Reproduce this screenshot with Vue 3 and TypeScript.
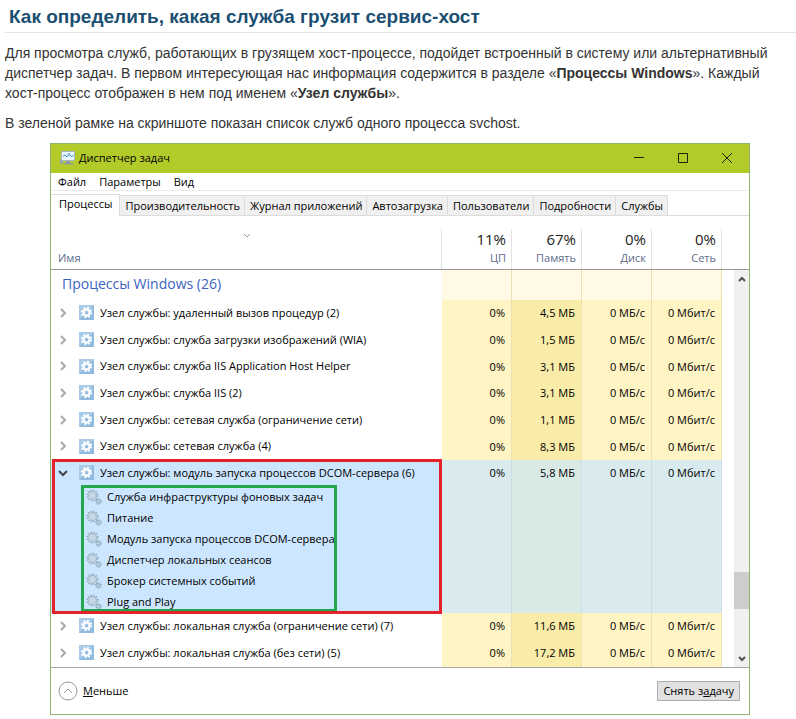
<script setup lang="ts">
import { ref } from 'vue'

interface ProcessRow {
  name: string
  memory: string
  services?: string[]
}

const tabs = ['Процессы', 'Производительность', 'Журнал приложений', 'Автозагрузка', 'Пользователи', 'Подробности', 'Службы']
const activeTab = ref('Процессы')

const columns = [
  { load: '11%', label: 'ЦП' },
  { load: '67%', label: 'Память' },
  { load: '0%', label: 'Диск' },
  { load: '0%', label: 'Сеть' },
]

const rows: ProcessRow[] = [
  { name: 'удаленный вызов процедур (2)', memory: '4,5 МБ' },
  { name: 'служба загрузки изображений (WIA)', memory: '1,5 МБ' },
  { name: 'служба IIS Application Host Helper', memory: '3,1 МБ' },
  { name: 'служба IIS (2)', memory: '3,1 МБ' },
  { name: 'сетевая служба (ограничение сети)', memory: '1,1 МБ' },
  { name: 'сетевая служба (4)', memory: '8,3 МБ' },
  {
    name: 'модуль запуска процессов DCOM-сервера (6)',
    memory: '5,8 МБ',
    services: [
      'Служба инфраструктуры фоновых задач',
      'Питание',
      'Модуль запуска процессов DCOM-сервера',
      'Диспетчер локальных сеансов',
      'Брокер системных событий',
      'Plug and Play',
    ],
  },
  { name: 'локальная служба (ограничение сети) (7)', memory: '11,6 МБ' },
  { name: 'локальная служба (без сети) (5)', memory: '17,2 МБ' },
]
</script>

<template>
  <article class="article">
    <h1>Как определить, какая служба грузит сервис-хост</h1>
    <p>
      Для просмотра служб, работающих в грузящем хост-процессе, подойдет встроенный в систему или альтернативный
      диспетчер задач. В первом интересующая нас информация содержится в разделе «<b>Процессы Windows</b>». Каждый
      хост-процесс отображен в нем под именем «<b>Узел службы</b>».
    </p>
    <p>В зеленой рамке на скриншоте показан список служб одного процесса svchost.</p>

    <section class="window">
      <header class="titlebar">
        <svg class="app-icon" viewBox="0 0 16 14">
          <path d="M1 8h3v5H1z" fill="#9aa3a6" />
          <path d="M2.5.5h13v9h-13z" fill="#e9f4fb" stroke="#a3b9c4" />
          <path d="M4 5.500l2-1.500 2 2 2-3.500 2 3 2.500-1" fill="none" stroke="#3b93c4" />
          <path d="M7 10h4v2h3v1.500H5V12h2z" fill="#8f999c" />
        </svg>
        <span class="title">Диспетчер задач</span>
        <button class="caption" aria-label="Свернуть"><svg viewBox="0 0 12 12"><path d="M1 5.500h10" /></svg></button>
        <button class="caption" aria-label="Развернуть"><svg viewBox="0 0 12 12"><path d="M1.500 1.500h9v9h-9z" /></svg></button>
        <button class="caption" aria-label="Закрыть"><svg viewBox="0 0 12 12"><path d="M1 1l10 10M11 1L1 11" /></svg></button>
      </header>

      <nav class="menu">
        <button>Файл</button>
        <button>Параметры</button>
        <button>Вид</button>
      </nav>

      <div class="tabs" role="tablist">
        <button
          v-for="tab in tabs"
          :key="tab"
          role="tab"
          :class="{ active: tab === activeTab }"
          :aria-selected="tab === activeTab"
          @click="activeTab = tab"
        >{{ tab }}</button>
      </div>

      <div class="pane">
        <table>
          <colgroup>
            <col />
            <col v-for="c in columns" :key="c.label" class="metric-col" />
            <col class="gap-col" />
          </colgroup>
          <thead>
            <tr>
              <th class="name-head">
                <svg class="sort" viewBox="0 0 8 5"><path d="M1 1l3 3 3-3" /></svg>
                <span>Имя</span>
              </th>
              <th v-for="c in columns" :key="c.label" class="metric-head">
                <strong>{{ c.load }}</strong>
                <span>{{ c.label }}</span>
              </th>
              <th></th>
            </tr>
          </thead>
          <tbody>
            <tr class="group">
              <td>Процессы Windows (26)</td>
              <td v-for="c in columns" :key="c.label" class="metric"></td>
              <td></td>
            </tr>
            <tr v-for="row in rows" :key="row.name" :class="row.services ? 'selected' : 'process'">
              <td class="name-cell">
                <div class="name">
                  <svg v-if="row.services" class="chevron open" viewBox="0 0 10 10"><path d="M1 3l4 4 4-4" /></svg>
                  <svg v-else class="chevron" viewBox="0 0 10 10"><path d="M3 1l4 4-4 4" /></svg>
                  <svg class="gear-tile" viewBox="0 0 15 15">
                    <path d="M0 0h15v15H0z" fill="#8fbbe0" />
                    <path d="M0 0h15L0 15z" fill="#a9cbe8" />
                    <circle cx="7.500" cy="7.500" r="4.700" fill="none" stroke="#fff" stroke-width="2" stroke-dasharray="1.850 1.841" />
                    <circle cx="7.500" cy="7.500" r="3.100" fill="none" stroke="#fff" stroke-width="2.200" />
                  </svg>
                  <span>Узел службы: {{ row.name }}</span>
                </div>
                <ul v-if="row.services" class="services">
                  <li v-for="service in row.services" :key="service">
                    <svg class="gears" viewBox="0 0 16 16">
                      <circle cx="6.500" cy="6.500" r="5.200" fill="none" stroke="#93a9b8" stroke-width="1.600" stroke-dasharray="1.400 1.323" />
                      <circle cx="6.500" cy="6.500" r="3.800" fill="#d4e4ef" stroke="#9db3c2" stroke-width="1.200" />
                      <circle cx="6.500" cy="6.500" r="1.700" fill="#cde6ff" stroke="#a9bccb" stroke-width=".8" />
                      <circle cx="12.500" cy="12.500" r="2.600" fill="none" stroke="#8299a9" stroke-width="1.200" stroke-dasharray="1 1.042" />
                      <circle cx="12.500" cy="12.500" r="1.500" fill="#cde6ff" stroke="#8da3b3" />
                    </svg>
                    <span>{{ service }}</span>
                  </li>
                </ul>
              </td>
              <td class="metric">0%</td>
              <td class="metric memory">{{ row.memory }}</td>
              <td class="metric">0 МБ/с</td>
              <td class="metric">0 Мбит/с</td>
              <td></td>
            </tr>
          </tbody>
        </table>
        <div class="scroll">
          <div class="scrollbar">
            <button aria-label="Вверх"><svg viewBox="0 0 10 10"><path d="M2 7l3-3 3 3" /></svg></button>
            <div class="before"></div>
            <div class="thumb"></div>
            <div class="after"></div>
            <button aria-label="Вниз"><svg viewBox="0 0 10 10"><path d="M2 3l3 3 3-3" /></svg></button>
          </div>
        </div>
      </div>

      <footer class="footer">
        <button class="less">
          <svg viewBox="0 0 20 20"><circle cx="10" cy="10" r="9" /><path d="M6 12l4-4 4 4" /></svg>
          <span><u>М</u>еньше</span>
        </button>
        <button class="end-task">Снять з<u>а</u>дачу</button>
      </footer>
    </section>
  </article>
</template>

<style>
body {
  background: #fff;
}
</style>

<style scoped>
.article {
  padding: 1px 0 4px;
  font-family: "Liberation Sans", Arial, sans-serif;
  font-size: 14px;
  line-height: 20px;
  color: #333;
}
h1 {
  margin: 0 0 10px 5px;
  padding: 0 4px;
  border-bottom: 1px solid #e2e2e2;
  font-size: 19px;
  line-height: 31px;
  color: #1b4f72;
}
p {
  margin: 0 16px 10px 5px;
}
button {
  padding: 0;
  border: 0;
  background: none;
  font: inherit;
  color: inherit;
}
svg {
  display: block;
  flex: none;
}
.window {
  margin: 0 46px 0 50px;
  border: 1px solid #8fb56f;
  background: #fff;
  font-family: "Open Sans", "Noto Sans", sans-serif;
  font-size: 11px;
  line-height: 16px;
  color: #000;
}
.titlebar {
  display: flex;
  align-items: center;
  box-sizing: border-box;
  height: 29px;
  padding: 0 0 1px 8px;
  background: #b3cb29;
}
.app-icon {
  width: 16px;
  height: 14px;
}
.title {
  flex: 1;
  margin-left: 4px;
}
.caption {
  display: grid;
  place-items: center;
  width: 44px;
  height: 28px;
}
.caption svg {
  width: 12px;
  height: 12px;
  fill: none;
  stroke: #1c2008;
}
.menu {
  display: flex;
  gap: 13px;
  height: 17px;
  padding-left: 7px;
  border-bottom: 1px solid #ececec;
}
.tabs {
  display: flex;
  align-items: flex-end;
  height: 24px;
  border-bottom: 1px solid #dcdcdc;
}
.tabs button {
  height: 20px;
  padding: 0 4px 0 5px;
  border: 1px solid #dcdcdc;
  border-width: 1px 1px 0 0;
  background: #f0f0f0;
  white-space: nowrap;
}
.tabs .active {
  height: 22px;
  margin-bottom: -1px;
  padding: 0 7px 3px 8px;
  background: #fff;
}
.pane {
  display: flex;
  border-bottom: 1px solid #a6a6a6;
}
table {
  flex: 1;
  min-width: 0;
  table-layout: fixed;
  border-collapse: separate;
  border-spacing: 0;
}
.metric-col {
  width: 70px;
}
.gap-col {
  width: 12px;
}
th,
td {
  padding: 0;
  font-weight: 400;
  text-align: left;
  white-space: nowrap;
}
th {
  box-sizing: border-box;
  height: 54px;
  border-bottom: 1px solid #9a9a9a;
  color: #5d6b8c;
  vertical-align: bottom;
}
.name-head span {
  display: block;
  padding: 12px 0 3px 7px;
}
.sort {
  width: 8px;
  height: 5px;
  margin: 0 auto;
  fill: none;
  stroke: #9a9a9a;
}
.name-head,
.metric-head {
  background: linear-gradient(#e2e2e2, #e2e2e2) right bottom / 1px 40px no-repeat;
}
.metric-head {
  padding: 0 6px 3px 0;
  text-align: right;
}
.metric-head strong,
.metric-head span {
  display: block;
}
.metric-head strong {
  margin-bottom: 1px;
  font-size: 15px;
  line-height: 20px;
  font-weight: 400;
  color: #222;
}
.metric {
  padding-right: 6px;
  border-right: 1px solid #eedfae;
  background: #fff4c4;
  line-height: 25px;
  text-align: right;
  vertical-align: top;
}
.memory {
  background: #f9eca8;
}
.group td {
  box-sizing: border-box;
  height: 30px;
  padding: 0 0 2px 11px;
  font-size: 14px;
  color: #3c63c0;
}
.group .metric {
  background: #fff9e5;
}
.name {
  display: flex;
  align-items: center;
  box-sizing: border-box;
  height: 27px;
  padding: 0 0 2px 7px;
}
.process:nth-child(3n + 1) .name {
  height: 26px;
}
.process:last-child .name {
  height: 27px;
}
.chevron {
  width: 10px;
  height: 10px;
  fill: none;
  stroke: #a8a8a8;
  stroke-width: 2;
}
.open {
  stroke: #444;
}
.gear-tile {
  width: 15px;
  height: 15px;
  margin: 0 6px 0 11px;
}
.selected .name-cell {
  position: relative;
  background: #cde6ff;
}
.name-cell {
  vertical-align: top;
}
.selected .name-cell::after {
  content: "";
  position: absolute;
  inset: -1px 0 -1px 1px;
  border: 3px solid #e3222b;
}
.selected .metric {
  border-color: #cbdfe4;
  background: #d9ebee;
}
.selected .memory {
  background: #d9e9e6;
}
.services {
  position: relative;
  width: 256px;
  margin: 0 0 0 30px;
  padding: 0;
  list-style: none;
}
.services::after {
  content: "";
  position: absolute;
  inset: -2px 0 1px;
  border: 3px solid #22a84b;
}
.services li {
  display: flex;
  align-items: center;
  gap: 5px;
  box-sizing: border-box;
  height: 21px;
  padding: 0 0 2px 5px;
}
.gears {
  width: 16px;
  height: 16px;
}
.scroll {
  display: flex;
  flex-direction: column;
  width: 15px;
}
.scroll::before {
  content: "";
  height: 53px;
  border-bottom: 1px solid #9a9a9a;
}
.scrollbar {
  display: flex;
  flex: 1;
  flex-direction: column;
  background: #f0f0f0;
}
.scrollbar button {
  display: grid;
  place-items: center;
  height: 17px;
}
.scrollbar svg {
  width: 10px;
  height: 10px;
  fill: none;
  stroke: #505050;
  stroke-width: 2;
}
.before {
  flex: 7;
}
.thumb {
  height: 37px;
  background: #cdcdcd;
}
.after {
  flex: 1;
}
.footer {
  display: flex;
  align-items: center;
  justify-content: space-between;
  height: 46px;
  padding: 0 9px 0 7px;
}
.less {
  display: flex;
  align-items: center;
  gap: 5px;
}
.less svg {
  width: 20px;
  height: 20px;
  fill: none;
  stroke: #9a9a9a;
}
.end-task {
  height: 20px;
  padding: 0 5px;
  border: 1px solid #adadad;
  background: #e1e1e1;
  font-size: 11px;
  line-height: 18px;
}
</style>
